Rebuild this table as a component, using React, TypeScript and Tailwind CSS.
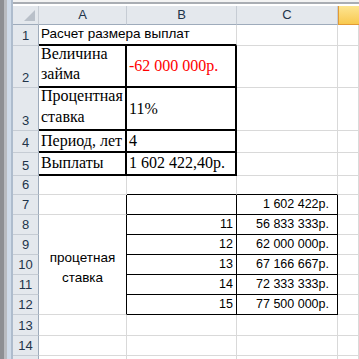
import React from "react";

const sans = "font-['Liberation_Sans',Arial,sans-serif]";
const serif = "font-['Liberation_Serif','Times_New_Roman',serif]";

// plain worksheet cell with light gridlines
const cell = "border-r border-b border-[#d9d9d9] bg-white";

const RowHead: React.FC<{ n?: number; center?: boolean }> = ({ n, center }) => (
  <div
    className={`flex justify-center ${center ? "items-center" : "items-end pb-[1px]"} bg-[#e4e8ed] border-r border-b border-r-[#9eabbb] border-b-[#c6ccd4] text-[13px] leading-[17px] text-[#22344a] ${sans}`}
  >
    {n}
  </div>
);

const ColHead: React.FC<{ label: string }> = ({ label }) => (
  <div
    className={`flex items-center justify-center bg-[#e4e8ed] border-r border-b border-r-[#c6ccd4] border-b-[#9eabbb] text-[13px] text-[#22344a] ${sans}`}
  >
    {label}
  </div>
);

const rates = [
  { n: 11, v: "56 833 333р." },
  { n: 12, v: "62 000 000р." },
  { n: 13, v: "67 166 667р." },
  { n: 14, v: "72 333 333р." },
  { n: 15, v: "77 500 000р." },
];

export default function App() {
  return (
    <div className="flex w-[359px] h-[359px] overflow-hidden bg-white">
      {/* window frame on the left */}
      <div className="flex w-[13px] shrink-0">
        <div className="w-[4px] bg-[#8d8f93]" />
        <div className="w-[3px] bg-[#b9bcc1]" />
        <div className="w-[4px] bg-[#cfdbe9]" />
        <div className="w-[2px] bg-[#aebccd]" />
      </div>

      <div className="flex flex-col flex-1 min-w-0">
        {/* bottom edge of the formula bar */}
        <div className="h-[6px] shrink-0 flex flex-col">
          <div className="h-[2px] bg-[#f3f3f3]" />
          <div className="h-[2px] bg-[#a9adb3]" />
          <div className="h-[2px] bg-white" />
        </div>

        <div className="grid grid-cols-[26px_88px_110px_101px_21px] grid-rows-[19px_21px_42px_43px_22px_23px_19px_20px_20px_20px_20px_20px_20px_21px_20px_20px]">
          {/* column headers */}
          <div className="flex items-end justify-end pr-[3px] pb-[3px] bg-[#e4e8ed] border-r border-b border-r-[#c6ccd4] border-b-[#9eabbb]">
            <svg width="11" height="11" viewBox="0 0 11 11">
              <polygon points="11,0 11,11 0,11" fill="#b9c0c9" />
            </svg>
          </div>
          <ColHead label="A" />
          <ColHead label="B" />
          <ColHead label="C" />
          <div className="border-l border-b border-[#e29a35] bg-gradient-to-b from-[#fde590] to-[#f8c94e]" />

          {/* row 1 */}
          <RowHead n={1} center />
          <div
            className={`relative z-10 flex items-end pl-[2px] pb-[2px] whitespace-nowrap border-b-2 border-black bg-white text-[13.5px] leading-[17px] ${sans}`}
          >
            Расчет размера выплат
          </div>
          <div className="border-r border-r-[#d9d9d9] border-b-2 border-b-black bg-white" />
          <div className={cell} />
          <div className={cell} />

          {/* row 2 */}
          <RowHead n={2} />
          <div
            className={`flex items-end pl-[2px] pb-[2px] border-r-2 border-b-2 border-black text-[16px] leading-[20px] ${serif}`}
          >
            <span>
              Величина
              <br />
              займа
            </span>
          </div>
          <div
            className={`flex items-center pl-[2px] border-r-2 border-b-2 border-black text-[16px] text-[#ff0000] ${serif}`}
          >
            -62 000 000р.
          </div>
          <div className={cell} />
          <div className={cell} />

          {/* row 3 */}
          <RowHead n={3} />
          <div
            className={`flex items-end pl-[2px] pb-[2px] border-r-2 border-b-2 border-black text-[16px] leading-[21px] ${serif}`}
          >
            <span>
              Процентная
              <br />
              ставка
            </span>
          </div>
          <div
            className={`flex items-center pl-[2px] border-r-2 border-b-2 border-black text-[16px] ${serif}`}
          >
            11%
          </div>
          <div className={cell} />
          <div className={cell} />

          {/* row 4 */}
          <RowHead n={4} />
          <div
            className={`flex items-end pl-[2px] pb-[1px] border-r-2 border-b-2 border-black text-[16px] leading-[18px] ${serif}`}
          >
            Период, лет
          </div>
          <div
            className={`flex items-end pl-[2px] pb-[1px] border-r-2 border-b-2 border-black text-[16px] leading-[18px] ${serif}`}
          >
            4
          </div>
          <div className={cell} />
          <div className={cell} />

          {/* row 5 */}
          <RowHead n={5} />
          <div
            className={`flex items-end pl-[2px] pb-[2px] border-r-2 border-b-2 border-black text-[16px] leading-[18px] ${serif}`}
          >
            Выплаты
          </div>
          <div
            className={`flex items-end pl-[2px] pb-[2px] border-r-2 border-b-2 border-black text-[16px] leading-[18px] ${serif}`}
          >
            1 602 422,40р.
          </div>
          <div className={cell} />
          <div className={cell} />

          {/* row 6 */}
          <RowHead n={6} />
          <div className={cell} />
          <div className="border-r border-r-[#d9d9d9] border-b border-b-black" />
          <div className="border-r border-r-[#d9d9d9] border-b border-b-black" />
          <div className={cell} />

          {/* row 7 */}
          <RowHead n={7} />
          <div className="border-r border-r-black border-b border-b-[#d9d9d9]" />
          <div className="border-r border-b border-black" />
          <div
            className={`flex items-end justify-end pr-[8px] pb-[2px] border-r border-b border-black text-[12.5px] leading-[16px] ${sans}`}
          >
            1 602 422р.
          </div>
          <div className={cell} />

          {/* rows 8-12: rate table */}
          {rates.map((r, i) => (
            <React.Fragment key={r.n}>
              <RowHead n={8 + i} />
              {i === 0 && (
                <div
                  className={`row-span-5 flex items-center justify-center pt-[6px] text-center border-r border-r-black border-b border-b-[#d9d9d9] text-[13.5px] leading-[20px] ${sans}`}
                >
                  <span>
                    процетная
                    <br />
                    ставка
                  </span>
                </div>
              )}
              <div
                className={`flex items-end justify-end pr-[3px] pb-[2px] border-r border-b border-black text-[12.5px] leading-[16px] ${sans}`}
              >
                {r.n}
              </div>
              <div
                className={`flex items-end justify-end pr-[8px] pb-[2px] border-r border-b border-black text-[12.5px] leading-[16px] ${sans}`}
              >
                {r.v}
              </div>
              <div className={cell} />
            </React.Fragment>
          ))}

          {/* empty rows below; the last one is only partly in view */}
          {[13, 14, 0].map((n) => (
            <React.Fragment key={n}>
              <RowHead n={n || undefined} />
              <div className={cell} />
              <div className={cell} />
              <div className={cell} />
              <div className={cell} />
            </React.Fragment>
          ))}
        </div>
      </div>
    </div>
  );
}
